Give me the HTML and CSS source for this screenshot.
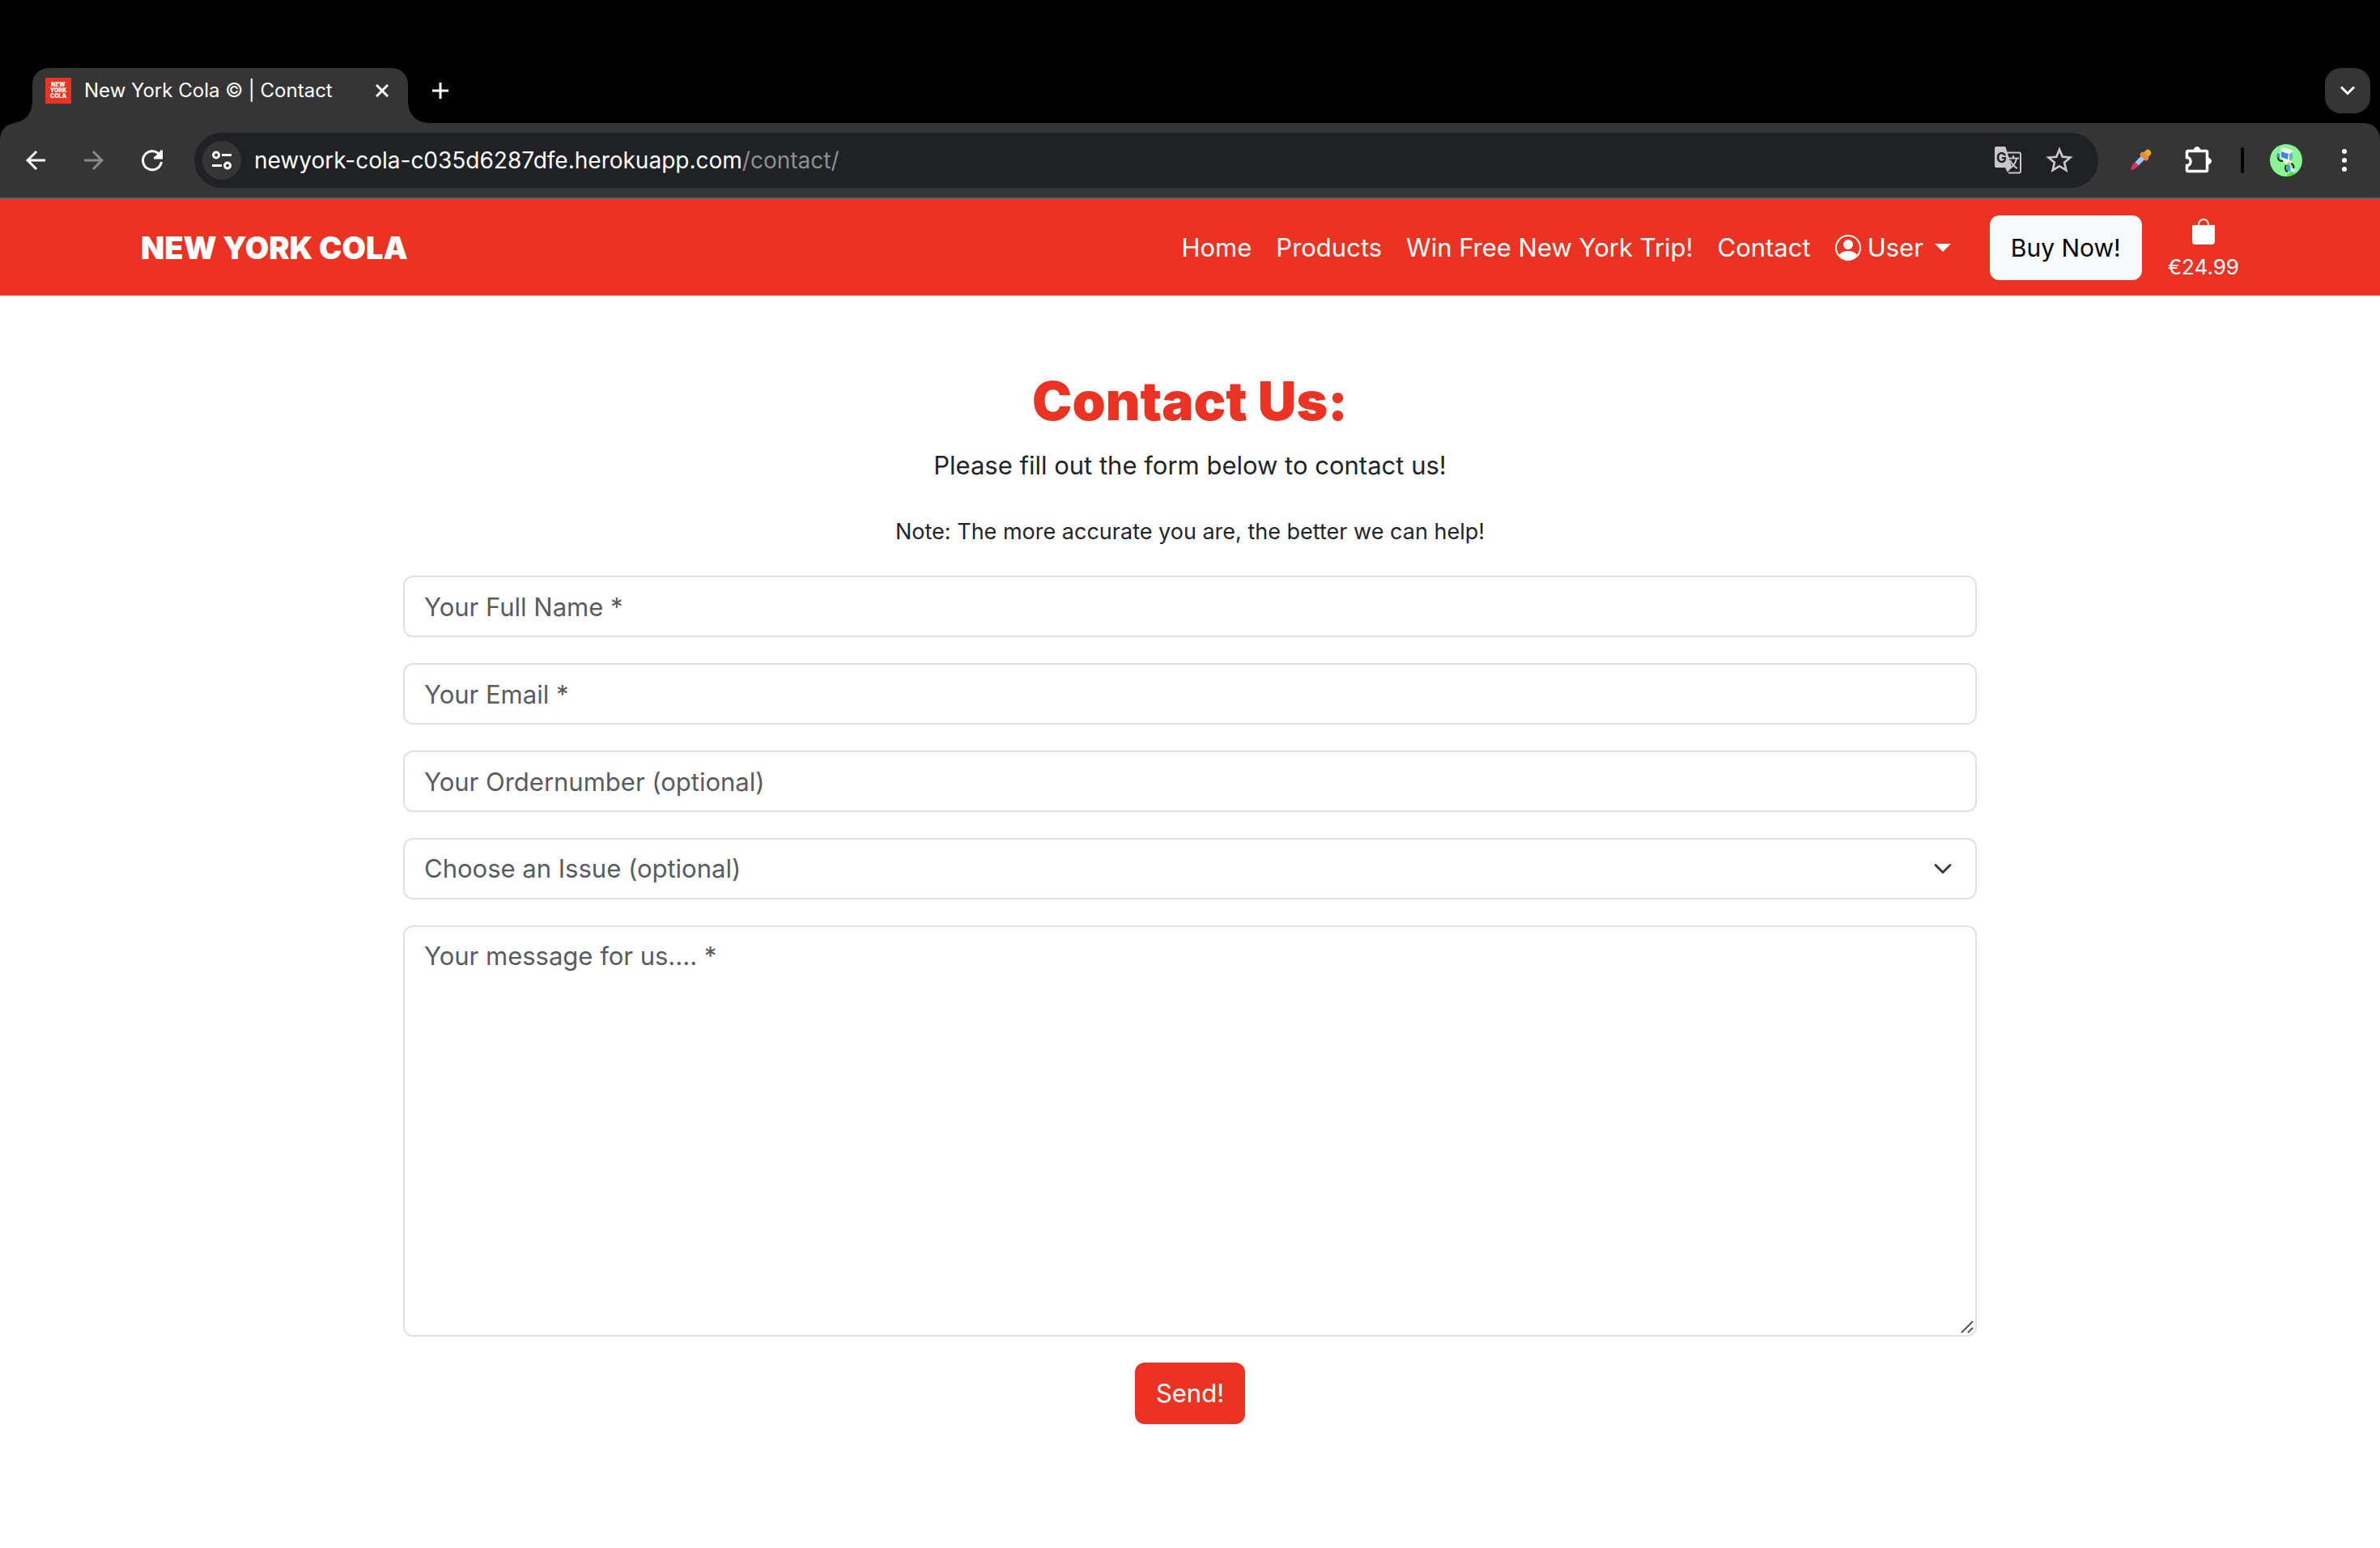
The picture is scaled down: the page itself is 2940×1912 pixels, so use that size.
FILE: index.html
```html
<!DOCTYPE html>
<html lang="en">
<head>
<meta charset="utf-8">
<title>New York Cola © | Contact</title>
<link rel="stylesheet" href="styles.css">
</head>
<body>
<div class="browser">
  <div class="tabstrip">
    <div class="tab">
      <span class="favicon">NEW<br>YORK<br>COLA</span>
      <span class="tab-title">New York Cola © | Contact</span>
      <button class="icon-btn tab-close" type="button" aria-label="Close tab">
        <svg width="16" height="16" viewBox="0 0 16 16" fill="none" stroke="#fff" stroke-width="3"><path d="M1 1l14 14M15 1L1 15"/></svg>
      </button>
    </div>
    <button class="icon-btn" type="button" aria-label="New tab">
      <svg width="20" height="20" viewBox="0 0 20 20" fill="none" stroke="#fff" stroke-width="3"><path d="M10 0v20M0 10h20"/></svg>
    </button>
    <button class="icon-btn tab-search" type="button" aria-label="Search tabs">
      <svg width="18" height="12" viewBox="0 0 18 12" fill="none" stroke="#fff" stroke-width="3"><path d="M1 1.500l8 8 8-8"/></svg>
    </button>
  </div>

  <div class="toolbar">
    <div class="history">
      <button class="icon-btn" type="button" aria-label="Back">
        <svg width="36" height="36" viewBox="0 0 24 24" fill="#fff"><path d="M20 11H7.830l5.590-5.590L12 4l-8 8 8 8 1.410-1.410L7.830 13H20z"/></svg>
      </button>
      <button class="icon-btn" type="button" aria-label="Forward">
        <svg width="36" height="36" viewBox="0 0 24 24" fill="#8a8a8a"><path d="M4 13h12.170l-5.590 5.590L12 20l8-8-8-8-1.410 1.410L16.170 11H4z"/></svg>
      </button>
      <button class="icon-btn" type="button" aria-label="Reload">
        <svg width="40" height="40" viewBox="0 0 40 40" fill="none" stroke="#fff" stroke-width="3"><path d="M31.400 22a11.500 11.500 0 1 1-2-8.500"/><path d="M31 7.500V17H22z" fill="#fff" stroke="none"/><path d="M31.500 7.500v9.500H22"/></svg>
      </button>
    </div>
    <div class="omnibox">
      <button class="icon-btn site-info" type="button" aria-label="View site information">
        <svg width="24" height="24" viewBox="0 0 24 24" fill="none" stroke="#fff" stroke-width="3"><circle cx="5" cy="5.500" r="3.500"/><path d="M12 5.500h12M0 18.500h12"/><circle cx="19" cy="18.500" r="3.500"/></svg>
      </button>
      <div class="url" role="textbox" aria-label="Address">newyork-cola-c035d6287dfe.herokuapp.com<span class="url-path">/contact/</span></div>
      <button class="icon-btn omni-action" type="button" aria-label="Translate this page">
        <svg width="40" height="40" viewBox="0 0 40 40"><path d="M19 10.500h15a2 2 0 0 1 2 2v21a2 2 0 0 1-2 2H21" fill="none" stroke="#c7c7c7" stroke-width="2"/><path d="M6 3h10a2 2 0 0 1 2 2l7 23-5 7-3-6H6a2 2 0 0 1-2-2V5a2 2 0 0 1 2-2z" fill="#c7c7c7"/><text x="6" y="23" class="glyph-g">G</text><path d="M20 17.500h14M27 14v3.500M31 18c-1 5-4 9-8 12M23 20c2 4 5 8 9 10" fill="none" stroke="#c7c7c7" stroke-width="2"/></svg>
      </button>
      <button class="icon-btn omni-action" type="button" aria-label="Bookmark this tab">
        <svg width="40" height="40" viewBox="0 0 24 24" fill="#c7c7c7"><path d="M22 9.240l-7.190-.620L12 2 9.190 8.630 2 9.240l5.460 4.730L5.820 21 12 17.270 18.180 21l-1.630-7.030zM12 15.400l-3.760 2.270 1-4.280-3.320-2.880 4.380-.380L12 6.100l1.710 4.040 4.380.380-3.320 2.880 1 4.280z"/></svg>
      </button>
    </div>
    <div class="extensions">
      <button class="icon-btn" type="button" aria-label="Colour picker">
        <svg width="28" height="28" viewBox="0 0 28 28"><g transform="rotate(45 14 14)"><path d="M11 9h6v12h-6z" fill="#9cc9f7"/><path d="M11 20h6v5l-2 5h-2l-2-5z" fill="#d8345f"/><rect x="10" y="-3" width="8" height="12" rx="4" fill="#f5a336"/><rect x="8" y="4" width="12" height="6" rx="2" fill="#e58a3a"/></g></svg>
      </button>
      <button class="icon-btn" type="button" aria-label="Extensions">
        <svg width="36" height="36" viewBox="0 0 36 36"><path d="M5 6.500h22a1.500 1.500 0 0 1 1.500 1.500v22a1.500 1.500 0 0 1-1.500 1.500H5A1.500 1.500 0 0 1 3.500 30v-5.500c6 0 6-10 0-10V8A1.500 1.500 0 0 1 5 6.500z" fill="none" stroke="#fff" stroke-width="3.500"/><path d="M12 6a4 4.500 0 0 1 8 0zM29 15a4.500 4 0 0 1 0 8z" fill="#fff" stroke="#fff"/></svg>
      </button>
    </div>
    <span class="divider"></span>
    <button class="icon-btn avatar" type="button" aria-label="Profile">
      <svg width="40" height="40" viewBox="0 0 40 40"><circle cx="20" cy="20" r="20" fill="#8af593"/><path d="M21 38l9-6 1 4a20 20 0 0 1-8 4z" fill="#5fd83f"/><path d="M10 16c0 3 2 5 6 5" fill="none" stroke="#222" stroke-width="2"/><path d="M9 11l3 1v5l-4-1z" fill="#4f8fe0"/><path d="M15 18l12 3-1 5-6-1z" fill="#fff"/><path d="M20 26c-2 3-1 7 2 8" fill="none" stroke="#222" stroke-width="2"/><path d="M26 24c3 1 4 3 3 6" fill="none" stroke="#222" stroke-width="2"/><path d="M21 24l4 2v8l-4-1z" fill="#4f9be8"/><path d="M27 29l4 3-1 3-4-2z" fill="#e8f4ff"/><path d="M14 6l3-2 11 4v10l-4 3-11-4z" fill="#fff"/><path d="M14 9l9 3-1 7-8-3z" fill="#3f86dc"/><path d="M24 12l4-2v8l-4 3z" fill="#6ba6ea"/><path d="M22 23l3 1" stroke="#f4a825" stroke-width="2"/></svg>
    </button>
    <button class="icon-btn" type="button" aria-label="Menu">
      <svg width="6" height="28" viewBox="0 0 6 28" fill="#fff"><circle cx="3" cy="3" r="3"/><circle cx="3" cy="14" r="3"/><circle cx="3" cy="25" r="3"/></svg>
    </button>
  </div>
</div>

<header class="site-header">
  <div class="container">
    <a class="brand" href="#">NEW YORK COLA</a>
    <nav class="site-nav">
      <a href="#">Home</a>
      <a href="#">Products</a>
      <a href="#">Win Free New York Trip!</a>
      <a href="#">Contact</a>
      <a class="user" href="#">
        <svg width="32" height="32" viewBox="0 0 16 16" fill="#fff"><path d="M11 6a3 3 0 1 1-6 0 3 3 0 0 1 6 0"/><path fill-rule="evenodd" d="M0 8a8 8 0 1 1 16 0A8 8 0 0 1 0 8m8-7a7 7 0 0 0-5.468 11.370C3.242 11.226 4.805 10 8 10s4.757 1.225 5.468 2.370A7 7 0 0 0 8 1"/></svg>
        User <span class="caret"></span>
      </a>
    </nav>
    <button class="buy" type="button">Buy Now!</button>
    <a class="cart" href="#">
      <svg width="32" height="32" viewBox="0 0 16 16" fill="#fff"><path d="M8 1a2.500 2.500 0 0 1 2.500 2.500V4h-5v-.5A2.500 2.500 0 0 1 8 1m3.500 3v-.5a3.500 3.500 0 1 0-7 0V4H1v10a2 2 0 0 0 2 2h10a2 2 0 0 0 2-2V4z"/></svg>
      €24.99
    </a>
  </div>
</header>

<main class="contact">
  <h1>Contact Us:</h1>
  <p class="lead">Please fill out the form below to contact us!</p>
  <p class="note">Note: The more accurate you are, the better we can help!</p>
  <form class="contact-form">
    <input class="field" type="text" placeholder="Your Full Name *" aria-label="Your Full Name">
    <input class="field" type="email" placeholder="Your Email *" aria-label="Your Email">
    <input class="field" type="text" placeholder="Your Ordernumber (optional)" aria-label="Your Ordernumber">
    <div class="field-wrap">
      <select class="field" aria-label="Choose an Issue"><option>Choose an Issue (optional)</option></select>
      <svg class="chevron" width="24" height="24" viewBox="0 0 16 16" fill="none" stroke="#343a40" stroke-width="2" stroke-linecap="round" stroke-linejoin="round"><path d="M2 5l6 6 6-6"/></svg>
    </div>
    <div class="field-wrap">
      <textarea class="field message" rows="10" placeholder="Your message for us.... *" aria-label="Your message for us"></textarea>
      <svg class="grip" width="16" height="16" viewBox="0 0 16 16" stroke="#555" stroke-width="2"><path d="M1 15L15 1M9 15l6-6"/></svg>
    </div>
    <button class="send" type="submit">Send!</button>
  </form>
</main>
</body>
</html>
```

FILE: styles.css
```css
* { box-sizing: border-box; }

body {
  margin: 0;
  background: #fff;
  color: #212529;
  font-family: Inter, "Liberation Sans", sans-serif;
  font-size: 31px;
  line-height: 48px;
}

a { color: inherit; text-decoration: none; }
svg { display: block; flex: none; }

button, input, select, textarea { font: inherit; }

/* Browser frame */
.browser { background: #000; color: #fff; }

.tabstrip {
  display: flex;
  align-items: center;
  padding: 84px 12px 0 40px;
  gap: 12px;
}

.tab {
  position: relative;
  display: flex;
  align-items: center;
  width: 464px;
  height: 68px;
  padding: 0 4px 12px 16px;
  border-radius: 20px 20px 0 0;
  background: #353535;
}

.tab::before, .tab::after {
  content: "";
  position: absolute;
  bottom: 0;
  width: 24px;
  height: 24px;
}
.tab::before { right: 100%; background: radial-gradient(circle at 0 0, transparent 23px, #353535 24px); }
.tab::after { left: 100%; background: radial-gradient(circle at 100% 0, transparent 23px, #353535 24px); }

.favicon {
  width: 32px;
  height: 32px;
  padding: 5px 0;
  background: #ea3323;
  font-size: 7px;
  font-weight: 900;
  line-height: 7px;
  text-align: center;
}

.tab-title {
  flex: 1;
  padding-left: 16px;
  font-size: 24px;
  line-height: 32px;
  white-space: nowrap;
}

.icon-btn {
  display: flex;
  align-items: center;
  justify-content: center;
  flex: none;
  width: 56px;
  height: 56px;
  padding: 0;
  border: 0;
  background: none;
}

.tabstrip .icon-btn { margin-bottom: 12px; }
.tab .tab-close { margin-bottom: 0; }
.tabstrip .tab-search { margin-left: auto; border-radius: 20px; background: #353535; }

.toolbar {
  display: flex;
  align-items: center;
  height: 94px;
  padding: 0 16px;
  border-bottom: 2px solid #5f6061;
  border-radius: 20px 20px 0 0;
  background: #353535;
}

.history, .extensions { display: flex; gap: 16px; }

.omnibox {
  display: flex;
  align-items: center;
  flex: 1;
  height: 68px;
  margin: 0 24px;
  padding: 0 28px 0 10px;
  border-radius: 34px;
  background: #202124;
}

.site-info { width: 48px; height: 48px; border-radius: 50%; background: #353535; }
.url { flex: 1; padding-left: 16px; font-size: 28px; line-height: 40px; }
.url-path { color: #8e8f91; }
.omni-action { width: 40px; margin-left: 24px; }
.glyph-g { fill: #202124; font-size: 17px; font-weight: 700; }

.divider { width: 4px; height: 32px; margin: 0 32px 0 24px; border-radius: 2px; background: #000; }
.avatar { width: 40px; margin-right: 24px; }

/* Site header */
.site-header { background: #ea3323; color: #fff; }

.container {
  display: flex;
  align-items: center;
  max-width: 2640px;
  margin: 0 auto;
  padding: 16px 24px 15px;
}

.brand { margin-right: auto; font-size: 38px; font-weight: 900; }
.site-nav { display: flex; gap: 30px; margin-right: 48px; }
.user { display: flex; align-items: center; gap: 8px; }
.caret { margin-left: 6px; border: 10px solid transparent; border-top-color: #fff; border-bottom: 0; }

.buy, .send {
  padding: 12px 24px;
  border: 2px solid #f8f9fa;
  border-radius: 12px;
  background: #f8f9fa;
  color: #000;
}
.buy { padding: 14px 24px; font-size: 30px; }

.cart {
  display: flex;
  flex-direction: column;
  align-items: center;
  gap: 8px;
  margin-left: 32px;
  padding-top: 8px;
  font-size: 26px;
  line-height: 40px;
}

/* Contact page */
.contact {
  width: 66.6667%;
  margin: 0 auto;
  padding: 90px 8px 150px;
  text-align: center;
}

h1 { margin: 0 0 16px; color: #ea3323; font-size: 66px; line-height: 80px; font-weight: 900; }
.lead { margin: 0 0 36px; }
.note { margin: 0 0 32px; font-size: 27px; line-height: 44px; }

.contact-form { display: flex; flex-direction: column; align-items: center; gap: 32px; }
.field-wrap { position: relative; display: flex; width: 100%; }

.field {
  display: block;
  width: 100%;
  height: 76px;
  padding: 12px 24px;
  border: 2px solid #dee2e6;
  border-radius: 12px;
  background: #fff;
  color: #585c5f;
  appearance: none;
}
.field::placeholder { color: #585c5f; opacity: 1; }
.message { height: auto; resize: none; }

.chevron { position: absolute; right: 30px; top: 26px; pointer-events: none; }
.grip { position: absolute; right: 4px; bottom: 4px; pointer-events: none; }

.send { border-color: #ea3323; background: #ea3323; color: #fff; }
```
